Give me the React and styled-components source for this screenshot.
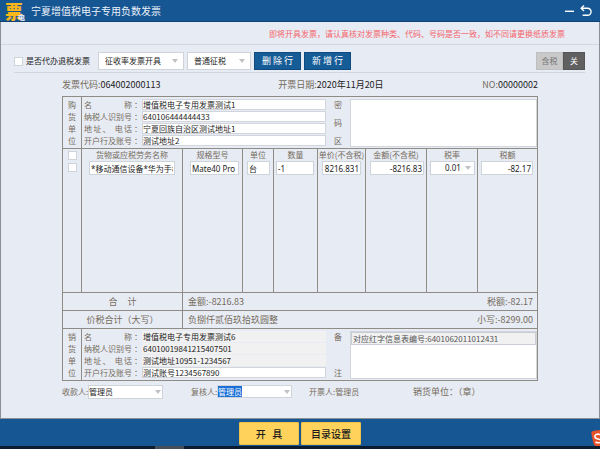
import React, { useEffect, useRef, useState } from 'react';
import styled, { createGlobalStyle } from 'styled-components';

const GlobalStyle = createGlobalStyle`
  * {
    box-sizing: border-box;
  }

  body {
    margin: 0;
    background: #e7ebf4;
    color: #1c1c1c;
    font-family: "Noto Sans CJK SC", sans-serif;
    font-size: 8px;
    line-height: 12px;
  }

  button, input, select, textarea {
    margin: 0;
    padding: 0;
    border-radius: 0;
    color: inherit;
    font: inherit;
    outline: none;
  }
`;

const Page = styled.div`
  display: flex;
  flex-direction: column;
  min-height: 100vh;
`;

const TitleBar = styled.header`
  display: flex;
  align-items: center;
  height: 22px;
  padding: 0 8px 0 5px;
  background: #165692;
  border-bottom: 1px solid #0e4274;
  color: #e9f1fa;
`;

const Logo = styled.span`
  position: relative;
  width: 20px;
  margin-right: 6px;
  color: #fbb61b;
  font-size: 18px;
  font-weight: 900;
  line-height: 20px;
`;

const LogoMark = styled.span`
  position: absolute;
  right: 0;
  bottom: 0;
  color: #dbe6f2;
  font-size: 7px;
  line-height: 8px;
`;

const Title = styled.h1`
  flex: 1;
  margin: 0;
  font-size: 10px;
  font-weight: 400;
`;

const IconButton = styled.button`
  display: flex;
  margin-left: 6px;
  border: none;
  background: none;
  color: #fff;
`;

const Content = styled.main`
  flex: 1;
  border: solid #8b8f97;
  border-width: 0 1px 1px;
`;

const Notice = styled.p`
  height: 23px;
  margin: 0;
  padding: 6px 34px 0 0;
  border-bottom: 1px solid #d3d6dd;
  color: #f5646a;
  text-align: right;
`;

const Toolbar = styled.div`
  display: flex;
  gap: 3px;
  height: 28px;
  margin: 0 14px 0 13px;
  padding-top: 7px;
  border-bottom: 1px solid #d3d6dd;
`;

const CheckLabel = styled.label`
  display: flex;
  align-items: center;
  gap: 3px;
  height: 18px;
  margin-right: 5px;
`;

const Check = styled.input.attrs({ type: 'checkbox' })`
  appearance: none;
  display: block;
  width: 9px;
  height: 9px;
  background: #fff;
  border: 1px solid #cfd3da;

  &:checked {
    background: #165692;
  }
`;

const Picker = styled.span`
  display: grid;
  align-items: center;
  width: ${(props) => props.$width || '100%'};
  height: ${(props) => props.$height || 18}px;

  > * {
    grid-area: 1 / 1;
  }

  select, input {
    appearance: none;
    width: 100%;
    height: 100%;
    padding: 0 12px 0 ${(props) => props.$indent || 0}px;
    background: #fff;
    border: 1px solid #cfd3da;
  }

  input::-webkit-calendar-picker-indicator {
    display: none !important;
  }

  input::selection {
    background: #1b6fd8;
    color: #fff;
  }
`;

const Arrow = styled.span`
  justify-self: end;
  margin-right: ${(props) => props.$inset || 2}px;
  border: solid transparent;
  border-width: 4px 3px 0;
  border-top-color: #bfc1c5;
  pointer-events: none;
`;

const ToolButton = styled.button`
  width: 47px;
  height: 18px;
  background: #165c97;
  border: 1px solid #0f4a80;
  color: #fff;
  font-size: 9px;
`;

const TaxSwitch = styled.div`
  display: flex;
  margin-left: auto;
`;

const SwitchButton = styled.button`
  width: ${(props) => (props.$on ? 22 : 27)}px;
  height: 18px;
  border: 1px solid ${(props) => (props.$on ? '#555' : '#bfbfbf')};
  background: ${(props) => (props.$on ? '#606060' : '#c9c9c9')};
  color: ${(props) => (props.$on ? '#fff' : '#757575')};
`;

const Paper = styled.section`
  margin: 0 61px;
  color: #756b5c;
`;

const InfoRow = styled.div`
  display: grid;
  grid-template-columns: 217fr 205fr auto;
  height: 23px;
  padding-top: 6px;
  font-size: 9px;

  b {
    color: #1c1c1c;
    font-weight: 400;
  }
`;

const Sheet = styled.div`
  border: 1px solid #8f8c85;
`;

const Party = styled.div`
  display: flex;
  height: 51px;
`;

const Side = styled.div`
  display: flex;
  flex-direction: column;
  justify-content: space-between;
  align-items: center;
  width: ${(props) => props.$width}px;
  padding: 2px 0 1px;
  border-right: ${(props) => (props.$line ? '1px solid #8f8c85' : 'none')};
`;

const Fields = styled.div`
  flex: 1;
  display: grid;
  gap: 1px;
  padding: 2px 0 2px 2px;
`;

const Field = styled.label`
  display: flex;
  line-height: 11px;
`;

const FieldName = styled.span`
  width: 48px;
  text-align-last: justify;
`;

const Colon = styled.span`
  width: 10px;
  padding-left: 2px;
`;

const FieldInput = styled.input`
  flex: 1;
  min-width: 0;
  height: 11px;
  background: ${(props) => (props.readOnly ? '#f1f1f1' : '#fff')};
  border: 1px solid ${(props) => (props.readOnly ? '#f1f1f1' : '#d2d5db')};
  color: #1c1c1c;
`;

const Box = styled.div`
  width: 187px;
  margin: 2px 0 1px;
  border: 1px solid #d2d5db;
  background: #fff;
`;

const BoxText = styled.textarea`
  display: block;
  width: 100%;
  height: 100%;
  border: none;
  background: none;
  resize: none;
`;

const RedInfo = styled.input`
  display: block;
  width: 100%;
  height: 13px;
  padding-left: 1px;
  background: #f1f1f1;
  border: 1px solid #c9ccd2;
  color: #555;
`;

const Items = styled.table`
  width: 100%;
  table-layout: fixed;
  border-collapse: separate;
  border-spacing: 0;
  border-bottom: 1px solid #8f8c85;

  th, td {
    padding: 0;
    font-weight: 400;
    vertical-align: top;
    white-space: nowrap;
  }

  th + th, td + td {
    border-left: 1px solid #8f8c85;
  }

  thead th, tfoot td {
    border-top: 1px solid #8f8c85;
  }

  thead tr {
    height: 13px;
  }

  tbody tr {
    height: 131px;
  }

  tfoot td {
    height: 18px;
    font-size: 9px;
    line-height: 17px;
    text-align: center;
  }
`;

const CheckCell = styled.div`
  display: flex;
  justify-content: center;
  padding-top: 2px;
`;

const Cell = styled.div`
  padding: 0 ${(props) => props.$right}px 0 ${(props) => props.$left}px;
  color: #1c1c1c;
  font-family: "Noto Sans", "Noto Sans CJK SC", sans-serif;
`;

const CellInput = styled.input`
  display: block;
  width: 100%;
  height: 14px;
  padding: 0 1px;
  background: #fff;
  border: 1px solid #cfd3da;
  text-align: ${(props) => props.$align || 'left'};
`;

const Totals = styled.div`
  display: flex;
  justify-content: space-between;
  padding: 0 4px 0 5px;
`;

const Signatures = styled.div`
  display: grid;
  grid-template-columns: 129fr 118fr 104fr 125fr;
  align-items: center;
  padding-top: 4px;
`;

const Signer = styled.label`
  display: flex;
  align-items: center;
  width: 101px;

  ${Picker} {
    color: #1c1c1c;
  }
`;

const SignerName = styled.span`
  width: 26px;
  white-space: nowrap;
`;

const SignText = styled.span`
  font-size: 9px;
`;

const Footer = styled.footer`
  position: relative;
  display: flex;
  justify-content: center;
  gap: 2px;
  height: 27px;
  padding-top: 3px;
  background: #165692;
`;

const MainButton = styled.button`
  width: 60px;
  height: 23px;
  background: #ffd35b;
  border: 1px solid #f0c049;
  border-radius: 1px;
  color: #1c1c1c;
  font-size: 10px;
  font-weight: 500;
`;

const ImeBadge = styled.svg`
  position: absolute;
  right: 0;
  bottom: 0;
`;

const TaskBar = styled.div`
  display: flex;
  height: 3px;
  padding-left: 155px;
  background: #0c1d30;
`;

const TaskItem = styled.span`
  width: 29px;
  background: #46505c;
`;

const columns = [
  { key: 'name', title: '货物或应税劳务名称', width: 101, left: 7, right: 7 },
  { key: 'model', title: '规格型号', width: 60, left: 7, right: 3 },
  { key: 'unit', title: '单位', width: 31, left: 4, right: 3 },
  { key: 'count', title: '数量', width: 44, left: 2, right: 3 },
  { key: 'price', title: '单价(不含税)', width: 48, left: 4, right: 4, align: 'right' },
  { key: 'amount', title: '金额(不含税)', width: 61, left: 4, right: 2, align: 'right' },
  { key: 'rate', title: '税率', width: 51, left: 3, right: 2 },
  { key: 'tax', title: '税额', width: 60, left: 3, right: 4, align: 'right' },
];

const item = {
  name: '*移动通信设备*华为手机',
  model: 'Mate40 Pro',
  unit: '台',
  count: '-1',
  price: '8216.831',
  amount: '-8216.83',
  rate: '0.01',
  tax: '-82.17',
};

const buyer = [
  { label: '名 称', value: '增值税电子专用发票测试1' },
  { label: '纳税人识别号', value: '640106444444433' },
  { label: '地址、 电话', value: '宁夏回族自治区测试地址1' },
  { label: '开户行及账号', value: '测试地址2' },
];

const seller = [
  { label: '名 称', value: '增值税电子专用发票测试6', locked: true },
  { label: '纳税人识别号', value: '64010019841215407501', locked: true },
  { label: '地址、 电话', value: '测试地址10951-1234567', locked: true },
  { label: '开户行及账号', value: '测试账号1234567890' },
];

const SideText = ({ text, width, line }) => (
  <Side $width={width} $line={line}>
    {text.split('').map((char) => (
      <span key={char}>{char}</span>
    ))}
  </Side>
);

const FieldList = ({ fields }) => (
  <Fields>
    {fields.map((field) => (
      <Field key={field.label}>
        <FieldName>{field.label}</FieldName>
        <Colon>：</Colon>
        <FieldInput defaultValue={field.value} readOnly={field.locked} />
      </Field>
    ))}
  </Fields>
);

const App = () => {
  const [withTax, setWithTax] = useState(false);
  const reviewer = useRef(null);

  useEffect(() => {
    reviewer.current.focus();
    reviewer.current.select();
  }, []);

  return (
    <Page>
      <GlobalStyle />
      <TitleBar>
        <Logo>
          票<LogoMark>电</LogoMark>
        </Logo>
        <Title>宁夏增值税电子专用负数发票</Title>
        <IconButton aria-label="最小化">
          <svg width="9" height="12" viewBox="0 0 9 12">
            <path d="M0 6.3h9" stroke="currentColor" strokeWidth="1.4" />
          </svg>
        </IconButton>
        <IconButton aria-label="返回">
          <svg width="12" height="12" viewBox="0 0 12 12" fill="none" stroke="currentColor" strokeWidth="1.4">
            <path d="M1 3.3h6.6a3.4 3.4 0 0 1 0 7H2.6" />
            <path d="M4 0.6L1.2 3.3L4 6" />
          </svg>
        </IconButton>
      </TitleBar>

      <Content>
        <Notice>即将开具发票，请认真核对发票种类、代码、号码是否一致，如不同请更换纸质发票</Notice>

        <Toolbar>
          <CheckLabel>
            <Check />
            是否代办退税发票
          </CheckLabel>
          <Picker $width="86px" $indent={6}>
            <select aria-label="开具方式">
              <option>征收率发票开具</option>
            </select>
            <Arrow $inset={6} />
          </Picker>
          <Picker $width="64px" $indent={6}>
            <select aria-label="征税方式">
              <option>普通征税</option>
            </select>
            <Arrow $inset={6} />
          </Picker>
          <ToolButton>删 除 行</ToolButton>
          <ToolButton>新 增 行</ToolButton>
          <TaxSwitch>
            <SwitchButton $on={withTax} onClick={() => setWithTax(true)}>含税</SwitchButton>
            <SwitchButton $on={!withTax} onClick={() => setWithTax(false)}>关</SwitchButton>
          </TaxSwitch>
        </Toolbar>

        <Paper>
          <InfoRow>
            <span>发票代码:<b>064002000113</b></span>
            <span>开票日期:<b>2020年11月20日</b></span>
            <span>NO:<b>00000002</b></span>
          </InfoRow>

          <Sheet>
            <Party>
              <SideText text="购货单位" width={19} line />
              <FieldList fields={buyer} />
              <SideText text="密码区" width={24} />
              <Box>
                <BoxText aria-label="密码区" />
              </Box>
            </Party>

            <Items>
              <colgroup>
                <col style={{ width: 18 }} />
                {columns.map((col) => (
                  <col key={col.key} style={{ width: col.width }} />
                ))}
              </colgroup>
              <thead>
                <tr>
                  <th><CheckCell><Check aria-label="全选" /></CheckCell></th>
                  {columns.map((col) => (
                    <th key={col.key}>{col.title}</th>
                  ))}
                </tr>
              </thead>
              <tbody>
                <tr>
                  <td><CheckCell><Check aria-label="选择行" /></CheckCell></td>
                  {columns.map((col) => (
                    <td key={col.key}>
                      <Cell $left={col.left} $right={col.right}>
                        {col.key === 'rate' ? (
                          <Picker $height={14} $indent={14}>
                            <select aria-label={col.title}>
                              <option>{item.rate}</option>
                            </select>
                            <Arrow $inset={4} />
                          </Picker>
                        ) : (
                          <CellInput aria-label={col.title} defaultValue={item[col.key]} $align={col.align} />
                        )}
                      </Cell>
                    </td>
                  ))}
                </tr>
              </tbody>
              <tfoot>
                <tr>
                  <td colSpan={2}>合&nbsp;&nbsp;&nbsp;&nbsp;&nbsp;计</td>
                  <td colSpan={7}>
                    <Totals><span>金额:-8216.83</span><span>税额:-82.17</span></Totals>
                  </td>
                </tr>
                <tr>
                  <td colSpan={2}>价税合计（大写）</td>
                  <td colSpan={7}>
                    <Totals><span>负捌仟贰佰玖拾玖圆整</span><span>小写:-8299.00</span></Totals>
                  </td>
                </tr>
              </tfoot>
            </Items>

            <Party>
              <SideText text="销货单位" width={19} line />
              <FieldList fields={seller} />
              <SideText text="备注" width={24} />
              <Box>
                <RedInfo aria-label="备注" defaultValue="对应红字信息表编号:6401062011012431" readOnly />
              </Box>
            </Party>
          </Sheet>

          <Signatures>
            <Signer>
              <SignerName>收款人:</SignerName>
              <Picker $height={13}>
                <select defaultValue="管理员">
                  <option>管理员</option>
                </select>
                <Arrow />
              </Picker>
            </Signer>
            <Signer>
              <SignerName>复核人:</SignerName>
              <Picker $height={13}>
                <input ref={reviewer} list="reviewers" defaultValue="管理员" />
                <Arrow />
              </Picker>
              <datalist id="reviewers">
                <option value="管理员" />
              </datalist>
            </Signer>
            <span>开票人:管理员</span>
            <SignText>销货单位：（章）</SignText>
          </Signatures>
        </Paper>
      </Content>

      <Footer>
        <MainButton>开&nbsp;&nbsp;&nbsp;具</MainButton>
        <MainButton>目录设置</MainButton>
        <ImeBadge width="9" height="16" viewBox="0 0 9 16">
          <path d="M9 0L2 1Q0 1.500 0.300 3.500L2.500 13.500Q3 16 5.500 16H9Z" fill="#e8502a" />
          <path d="M9 4.500C5.500 3.500 3.500 5 4 7S7.500 9 9 9.500M4.500 12C6 13 7.500 13 9 12.500" fill="none" stroke="#fff" strokeWidth="1.600" />
        </ImeBadge>
      </Footer>
      <TaskBar>
        <TaskItem />
      </TaskBar>
    </Page>
  );
};

export default App;
